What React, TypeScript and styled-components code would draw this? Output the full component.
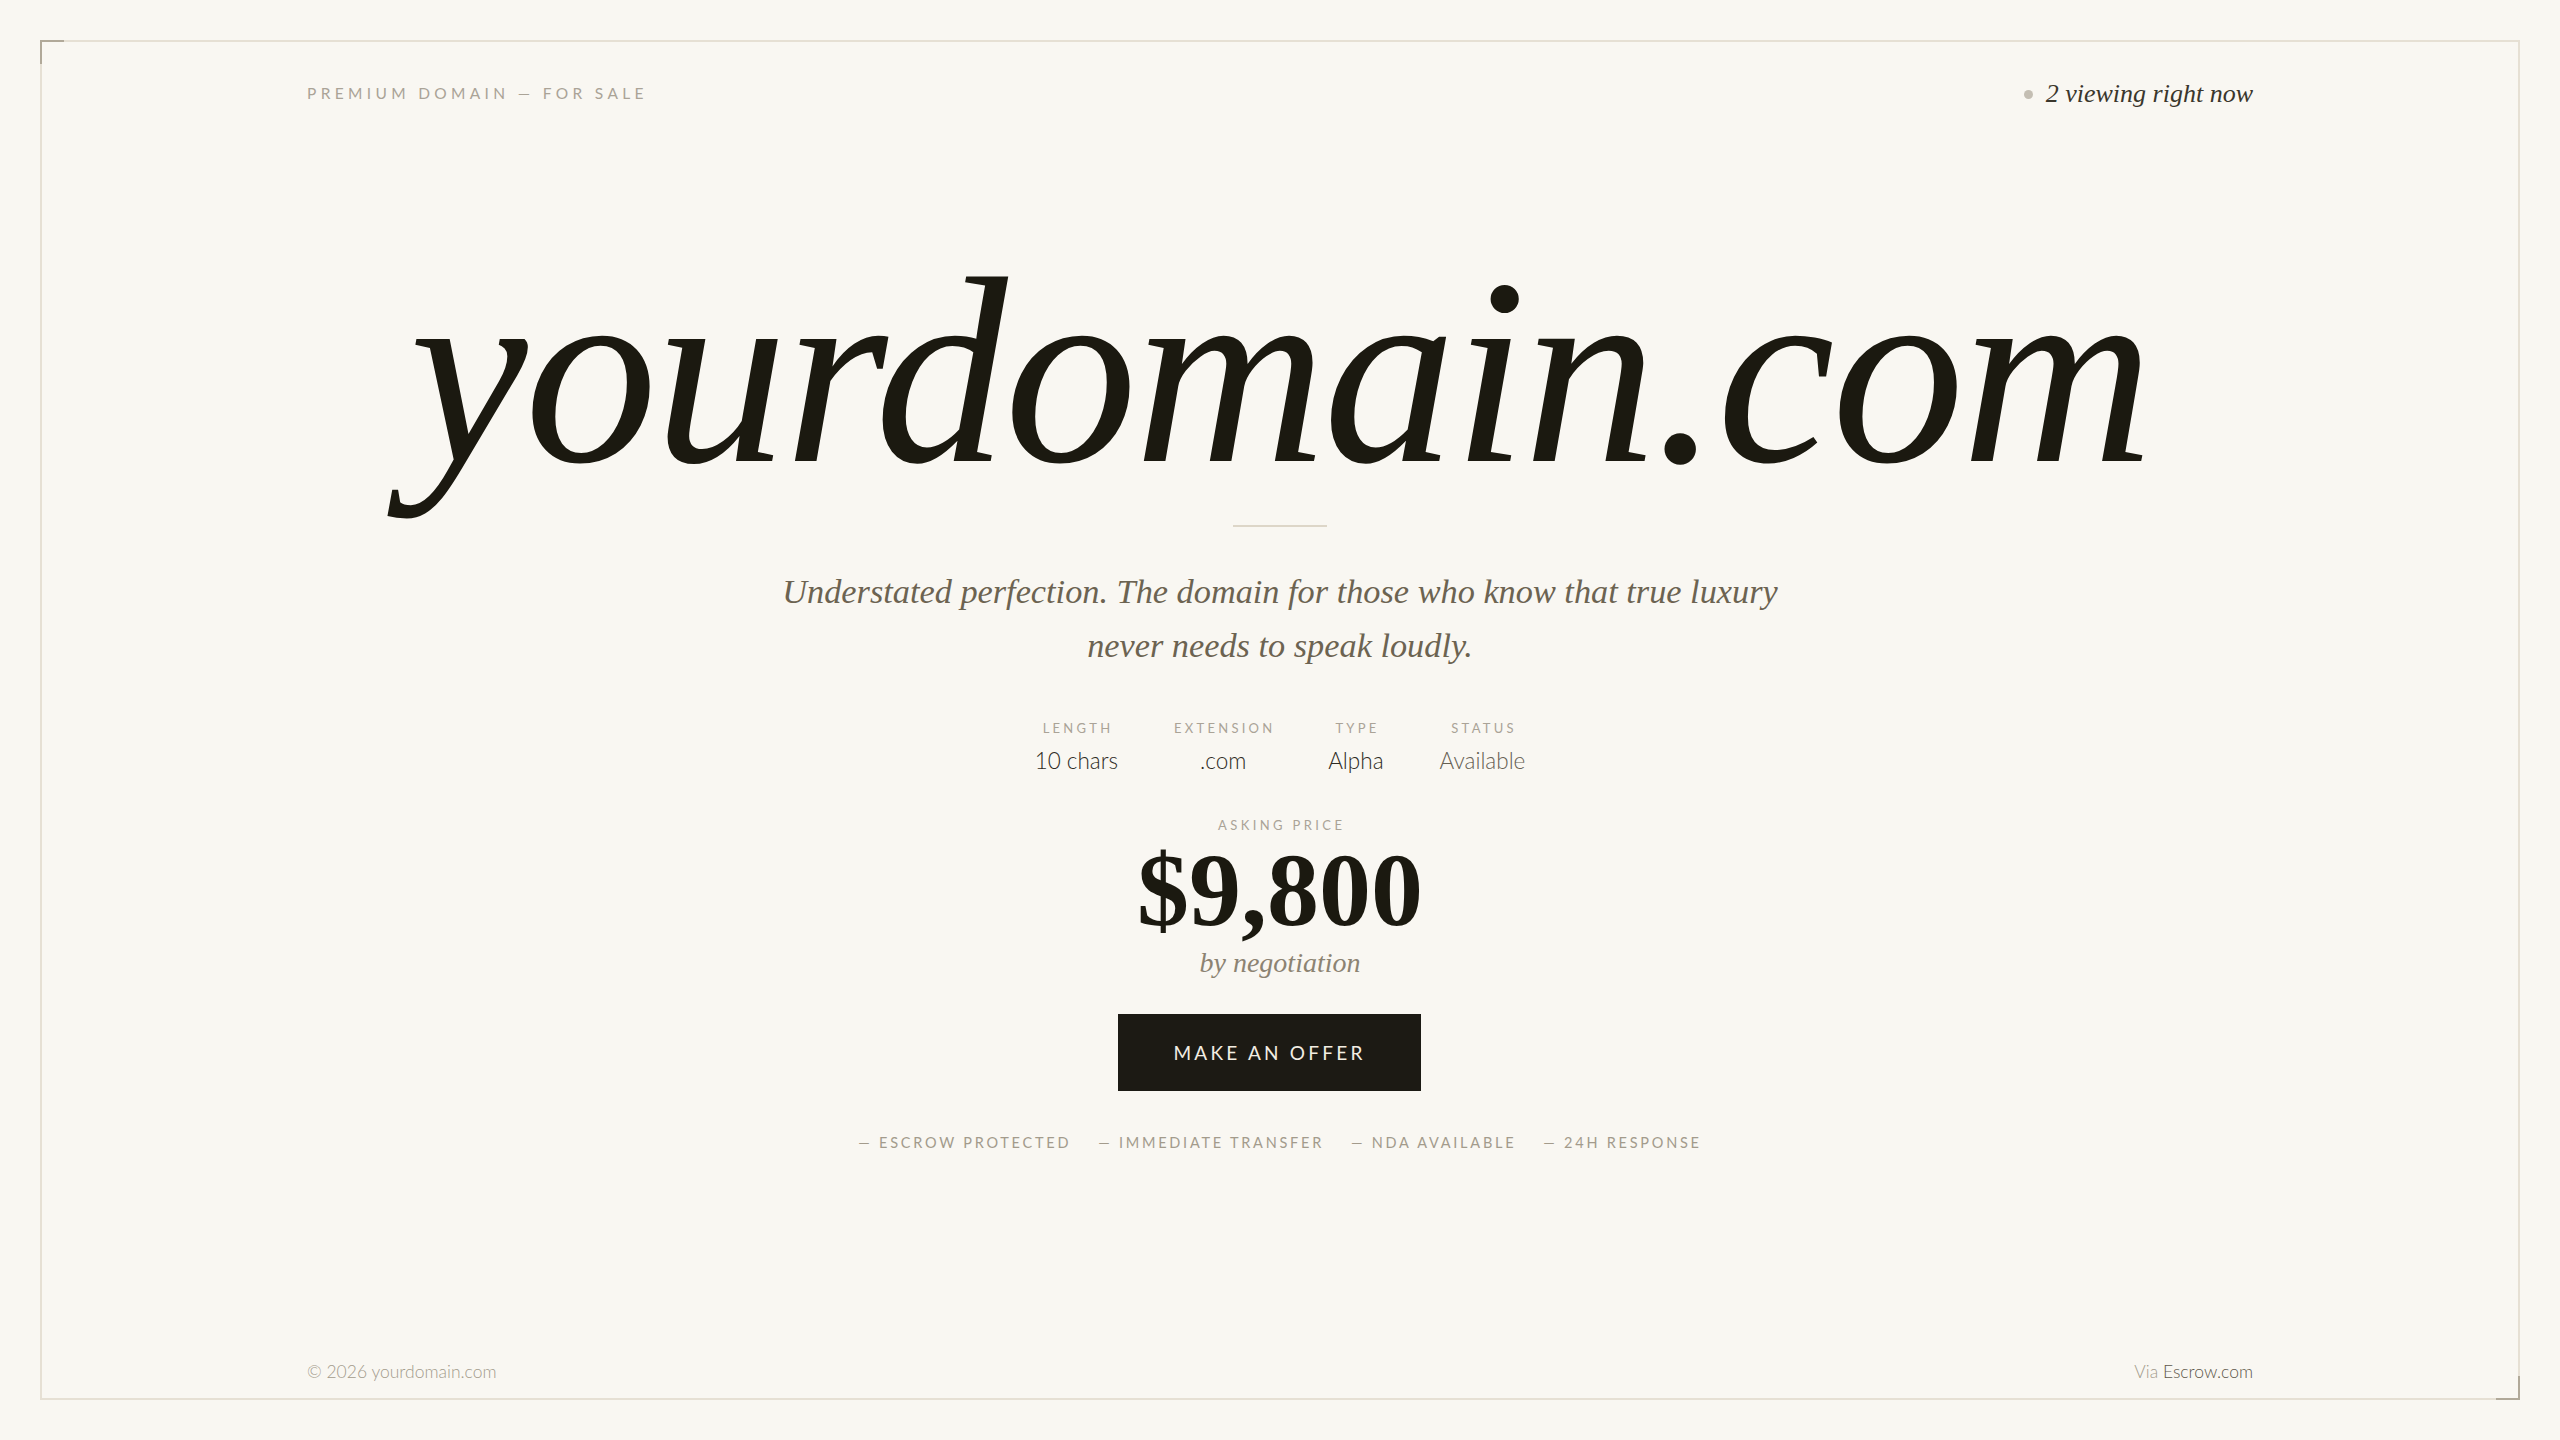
import React from "react";
import styled, { createGlobalStyle } from "styled-components";

const Global = createGlobalStyle`
  html, body { margin: 0; padding: 0; background: #f9f7f2; }
  body { font-family: "Lato", "Liberation Sans", sans-serif; color: #1c1a12; }
  * { box-sizing: border-box; }
`;

const serif = `"Liberation Serif", "DejaVu Serif", serif`;
const sans = `"Lato", "Liberation Sans", sans-serif`;

const Page = styled.div`
  width: 100%;
  height: 100vh;
  padding: 40px;
  background: #f9f7f2;
`;

const Frame = styled.div`
  position: relative;
  height: 100%;
  border: 2px solid #e6e0d4;
  display: flex;
  flex-direction: column;
  padding: 36px 265px 12px;
`;

const Corner = styled.span<{ $pos: "tl" | "br" }>`
  position: absolute;
  width: 24px;
  height: 24px;
  border-color: #b1a999;
  border-style: solid;
  border-width: 0;
  ${(p) =>
    p.$pos === "tl"
      ? `top: -2px; left: -2px; border-top-width: 2px; border-left-width: 2px;`
      : `bottom: -2px; right: -2px; border-bottom-width: 2px; border-right-width: 2px;`}
`;

const TopBar = styled.header`
  display: flex;
  justify-content: space-between;
  align-items: center;
  height: 30px;
`;

const Eyebrow = styled.div`
  font-family: ${sans};
  font-size: 15.5px;
  letter-spacing: 0.28em;
  text-transform: uppercase;
  color: #aaa397;
`;

const Live = styled.div`
  display: flex;
  align-items: center;
  gap: 13px;
  padding-top: 2px;
  font-family: ${serif};
  font-style: italic;
  font-size: 26px;
  color: #3a362c;
`;

const Dot = styled.span`
  width: 9px;
  height: 9px;
  border-radius: 50%;
  background: #c4beb3;
`;

const Main = styled.main`
  flex: 1;
  display: flex;
  flex-direction: column;
  align-items: center;
  padding-top: 129px;
`;

const Title = styled.h1`
  margin: 0;
  font-family: ${serif};
  font-style: italic;
  font-weight: 400;
  font-size: 266px;
  line-height: 270px;
  letter-spacing: -0.012em;
  color: #1b1910;
`;

const Rule = styled.div`
  width: 94px;
  height: 2px;
  margin-top: 18px;
  background: #ddd6c8;
`;

const Tagline = styled.p`
  margin: 37px 0 0;
  max-width: 1040px;
  text-align: center;
  font-family: ${serif};
  font-style: italic;
  font-size: 34.3px;
  line-height: 54px;
  color: #6c6351;
`;

const Specs = styled.dl`
  display: flex;
  gap: 56px;
  margin: 46px 0 0;
`;

const Spec = styled.div`
  display: flex;
  flex-direction: column;
  align-items: center;
  gap: 7px;
`;

const Label = styled.dt`
  font-family: ${sans};
  font-size: 13px;
  line-height: 20px;
  letter-spacing: 0.25em;
  text-transform: uppercase;
  color: #aaa397;
  margin-right: -0.25em;
`;

const Value = styled.dd<{ $muted?: boolean }>`
  margin: 0;
  font-family: ${sans};
  font-weight: 300;
  font-size: 22.5px;
  line-height: 32px;
  color: ${(p) => (p.$muted ? "#666052" : "#2e2b24")};
`;

const PriceLabel = styled.div`
  margin-top: 38px;
  font-family: ${sans};
  font-size: 13px;
  line-height: 20px;
  letter-spacing: 0.26em;
  text-transform: uppercase;
  color: #aaa397;
  margin-right: -0.26em;
`;

const Price = styled.div`
  margin-top: 8px;
  font-family: ${serif};
  font-weight: 700;
  font-size: 104px;
  line-height: 94px;
  color: #1b1910;
`;

const Terms = styled.div`
  margin-top: 12px;
  font-family: ${serif};
  font-style: italic;
  font-size: 28px;
  line-height: 28px;
  color: #8c8372;
`;

const OfferButton = styled.button`
  margin-top: 37px;
  margin-right: 21px;
  width: 303px;
  height: 77px;
  border: 0;
  background: #1c1a14;
  color: #f2ede2;
  font-family: ${sans};
  font-size: 19px;
  letter-spacing: 0.17em;
  text-transform: uppercase;
  cursor: pointer;
`;

const Perks = styled.ul`
  display: flex;
  gap: 27px;
  margin: 42px 0 0;
  padding: 0;
  list-style: none;
`;

const Perk = styled.li`
  font-family: ${sans};
  font-size: 14.5px;
  line-height: 20px;
  letter-spacing: 0.19em;
  text-transform: uppercase;
  color: #a39b8c;
`;

const Footer = styled.footer`
  display: flex;
  justify-content: space-between;
  align-items: center;
  height: 30px;
  font-family: ${sans};
  font-weight: 300;
  font-size: 17.5px;
  color: #a39b8c;
`;

const Strong = styled.span`
  color: #5e584b;
`;

const specs = [
  { label: "Length", value: "10 chars" },
  { label: "Extension", value: ".com" },
  { label: "Type", value: "Alpha" },
  { label: "Status", value: "Available", muted: true },
];

const perks = ["Escrow protected", "Immediate transfer", "NDA available", "24h response"];

export default function App() {
  return (
    <>
      <Global />
      <Page>
        <Frame>
          <Corner $pos="tl" />
          <Corner $pos="br" />
          <TopBar>
            <Eyebrow>Premium domain — for sale</Eyebrow>
            <Live>
              <Dot />
              2 viewing right now
            </Live>
          </TopBar>
          <Main>
            <Title>yourdomain.com</Title>
            <Rule />
            <Tagline>
              Understated perfection. The domain for those who know that true luxury never needs to
              speak loudly.
            </Tagline>
            <Specs>
              {specs.map((s) => (
                <Spec key={s.label}>
                  <Label>{s.label}</Label>
                  <Value $muted={s.muted}>{s.value}</Value>
                </Spec>
              ))}
            </Specs>
            <PriceLabel>Asking price</PriceLabel>
            <Price>$9,800</Price>
            <Terms>by negotiation</Terms>
            <OfferButton>Make an offer</OfferButton>
            <Perks>
              {perks.map((p) => (
                <Perk key={p}>— {p}</Perk>
              ))}
            </Perks>
          </Main>
          <Footer>
            <span>© 2026 yourdomain.com</span>
            <span>
              Via <Strong>Escrow.com</Strong>
            </span>
          </Footer>
        </Frame>
      </Page>
    </>
  );
}
